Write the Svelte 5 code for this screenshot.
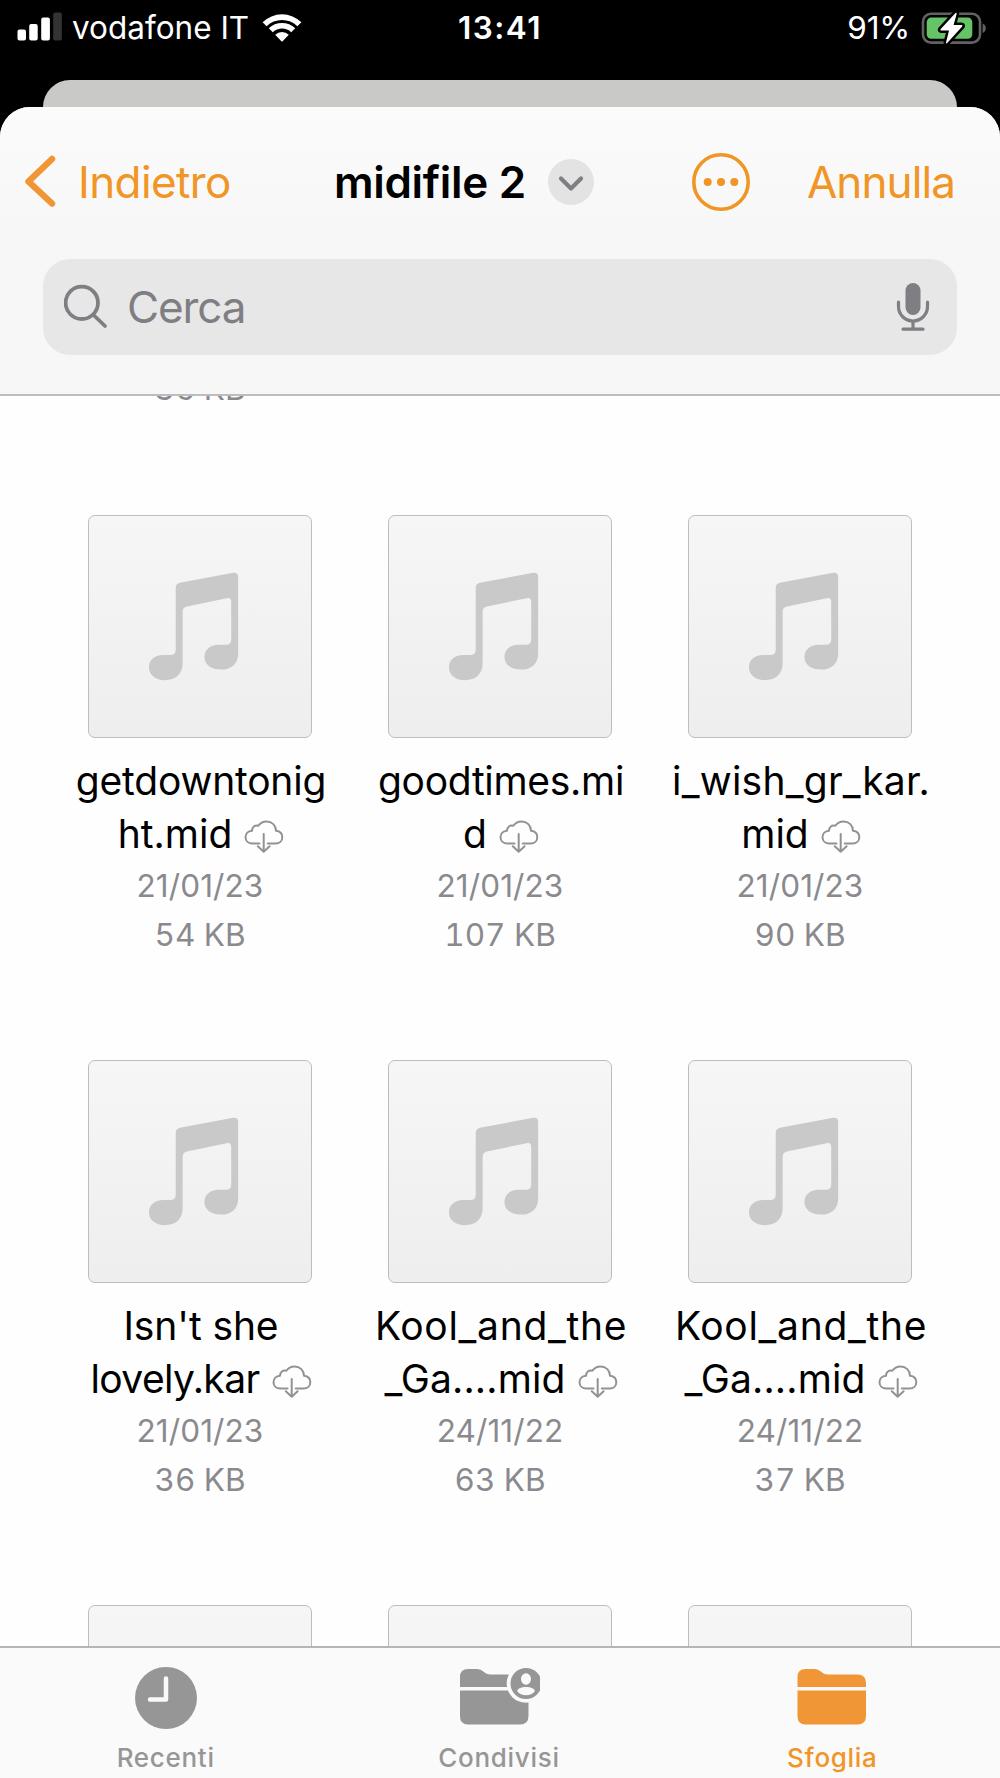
<script lang="ts">
  type FileItem = {
    lines: string[];
    tracking: number[];
    date: string;
    size: string;
  };

  const previousSizes = ['36 KB', '', ''];

  const rows: FileItem[][] = [
    [
      { lines: ['getdowntonig', 'ht.mid'], tracking: [-0.2, 0], date: '21/01/23', size: '54 KB' },
      { lines: ['goodtimes.mi', 'd'], tracking: [-0.3, 0], date: '21/01/23', size: '107 KB' },
      { lines: ['i_wish_gr_kar.', 'mid'], tracking: [0.25, 0], date: '21/01/23', size: '90 KB' }
    ],
    [
      { lines: ["Isn't she", 'lovely.kar'], tracking: [-0.1, -0.6], date: '21/01/23', size: '36 KB' },
      { lines: ['Kool_and_the', '_Ga....mid'], tracking: [0.7, 0.15], date: '24/11/22', size: '63 KB' },
      { lines: ['Kool_and_the', '_Ga....mid'], tracking: [0.7, 0.15], date: '24/11/22', size: '37 KB' }
    ]
  ];
</script>

{#snippet thumb()}
  <svg class="thumb" viewBox="0 0 223 223">
    <g transform="scale(.3333) translate(-86 -46)">
      <path d="M347 264Q347 251 360 248L521 218Q536 216 536 231V462C536 494 515 511 484 511C454 511 434 496 434 473C434 451 451 436 476 436H499Q515 436 515 420V306Q515 292 501 295L381 320Q368 323 368 336V492C368 525 347 543 314 543C285 543 266 527 266 504C266 482 283 467 309 467H331Q347 467 347 451Z" />
    </g>
  </svg>
{/snippet}

<div class="phone">
  <div class="status-bar">
    <div class="carrier">
      <svg class="signal" width="46" height="30" viewBox="0 0 46 30">
        <rect x="0.5" y="18.5" width="8.5" height="11" rx="2" />
        <rect x="12.2" y="13" width="8.5" height="16.5" rx="2" />
        <rect x="24.2" y="6.5" width="8.7" height="23" rx="2" />
        <rect class="off" x="36.2" y="1.5" width="8.7" height="28" rx="2" />
      </svg>
      <span class="carrier-name">vodafone IT</span>
      <svg class="wifi" width="40" height="30" viewBox="0 0 40 30">
        <path d="M0.6 9.3A27.6 27.6 0 0 1 39.4 9.3L35.4 13.2A22 22 0 0 0 4.6 13.2Z" />
        <path d="M6.8 15.3A18.8 18.8 0 0 1 33.2 15.3L29.2 19.2A13.2 13.2 0 0 0 10.8 19.2Z" />
        <path d="M13.2 21.8A9.8 9.8 0 0 1 26.8 21.8L20.6 28.2Q20 28.8 19.4 28.2Z" />
      </svg>
    </div>
    <div class="time">13:41</div>
    <div class="power">
      <span class="percent">91%</span>
      <svg width="66" height="34" viewBox="0 0 66 34">
        <rect class="shell" x="2" y="2.8" width="57" height="28.8" rx="8" />
        <path class="nub" d="M61.6 12.4Q64.8 14 64.8 17.2Q64.8 20.4 61.6 22Z" />
        <rect class="charge" x="5.7" y="6.6" width="45.6" height="21.2" rx="4.5" />
        <path class="bolt" d="M34.5 2L19.5 18.2Q18.8 19.5 20.2 19.5H28L25 31.5Q25 33 26.2 32L41.2 15.5Q42 14 40.5 14H32.6L35.7 2.8Q35.7 1 34.5 2Z" />
      </svg>
    </div>
  </div>

  <div class="sheet-behind"></div>

  <div class="sheet">
    <header>
      <div class="nav">
        <button class="back">
          <svg width="32" height="54" viewBox="0 0 32 54">
            <path d="M28 4L4.5 26.5L28 48.5" />
          </svg>
          <span>Indietro</span>
        </button>
        <div class="title">
          <h1>midifile 2</h1>
          <svg width="46" height="46" viewBox="0 0 46 46">
            <circle cx="23" cy="23" r="23" />
            <path d="M13 19.5L23 29.5L33 19.5" />
          </svg>
        </div>
        <svg class="more" width="58" height="58" viewBox="0 0 58 58">
          <circle class="ring" cx="29" cy="29" r="27.2" />
          <circle cx="15.7" cy="29" r="4" />
          <circle cx="29" cy="29" r="4" />
          <circle cx="42.3" cy="29" r="4" />
        </svg>
        <button class="cancel">Annulla</button>
      </div>

      <div class="search">
        <svg width="44" height="46" viewBox="0 0 44 46">
          <circle cx="17.8" cy="18.8" r="16.2" />
          <path d="M29.5 31L41 42" />
        </svg>
        <span class="placeholder">Cerca</span>
        <svg class="mic" width="34" height="50" viewBox="0 0 34 50">
          <rect x="9.5" y="1" width="15" height="32" rx="7.5" />
          <path d="M2.5 20V24.5A14.5 14.5 0 0 0 31.5 24.5V20M17 39V47M7 47.2H27" />
        </svg>
      </div>
    </header>

    <main>
      <div class="row previous">
        {#each previousSizes as size}
          <div class="size">{size}</div>
        {/each}
      </div>

      {#each rows as row}
        <div class="row">
          {#each row as file}
            <div class="file">
              {@render thumb()}
              <div class="name" style="letter-spacing: {file.tracking[0]}px">{file.lines[0]}</div>
              <div class="name" style="letter-spacing: {file.tracking[1]}px">
                <span>{file.lines[1]}</span>
                <svg class="cloud" width="40" height="34" viewBox="0 0 40 34">
                  <path d="M15.5 23.5H8.5C4.5 23.5 1.5 21 1.5 17.3C1.5 13.6 4.2 11 8 10.7C8 7 11 4.8 14.3 5.8C16.2 3 19 1.5 22.5 1.5C28 1.5 32 5.5 32 10.8C35.8 11.2 38.3 13.8 38.3 17.3C38.3 21 35.5 23.5 31.5 23.5H23.8" />
                  <path d="M19.7 14V31.5M13.8 26.3L19.7 31.8L25.6 26.3" />
                </svg>
              </div>
              <div class="date">{file.date}</div>
              <div class="size">{file.size}</div>
            </div>
          {/each}
        </div>
      {/each}

      <div class="row">
        {#each previousSizes as _}
          <div class="file">{@render thumb()}</div>
        {/each}
      </div>
    </main>
  </div>

  <nav class="tabs">
    <div class="tab">
      <svg width="80" height="64" viewBox="0 0 80 64">
        <circle cx="39" cy="32" r="31" />
        <path class="hands" d="M39 12.5V33.5H23" />
      </svg>
      <span>Recenti</span>
    </div>
    <div class="tab">
      <svg width="80" height="64" viewBox="0 0 80 64">
        <path d="M0 21V11Q0 3 8 3H17Q21 3 24 6L26 7.5Q28 8.5 31 8.5H60Q68.5 8.5 68.5 17V21Z" />
        <path d="M0 24.5H68.5V50Q68.5 58.5 60 58.5H8Q0 58.5 0 50Z" />
        <circle class="gap" cx="66" cy="17.5" r="19.3" />
        <circle cx="66" cy="17.5" r="15.5" />
        <ellipse class="gap" cx="66" cy="13" rx="5" ry="5.8" />
        <path class="gap" d="M57 25C58.5 19.5 73.5 19.5 75 25Q71.5 29.3 66 29.3Q60.5 29.3 57 25Z" />
      </svg>
      <span>Condivisi</span>
    </div>
    <div class="tab active">
      <svg width="80" height="64" viewBox="0 0 80 64">
        <path d="M4.5 21V11Q4.5 3 12.5 3H21.5Q25.5 3 28.5 6L30.5 7.5Q32.5 8.5 35.5 8.5H64.5Q73 8.5 73 17V21Z" />
        <path d="M4.5 24.5H73V50Q73 58.5 64.5 58.5H12.5Q4.5 58.5 4.5 50Z" />
      </svg>
      <span>Sfoglia</span>
    </div>
  </nav>
</div>

<style>
  :global(body) {
    background: #000;
  }

  .phone {
    display: flex;
    flex-direction: column;
    width: 1000px;
    height: 1778px;
    overflow: hidden;
    background: #000;
    color: #000;
    font-family: Inter, "Liberation Sans", sans-serif;
    white-space: nowrap;
  }

  svg {
    display: block;
    flex: none;
  }

  button {
    display: flex;
    align-items: center;
    padding: 0;
    border: none;
    background: none;
    color: #f09526;
    font: inherit;
  }

  .status-bar {
    display: grid;
    grid-template-columns: 1fr auto 1fr;
    align-items: center;
    height: 55px;
    padding: 0 13px 0 17px;
    margin-bottom: 25px;
    box-sizing: border-box;
    color: #fff;
    font-size: 31.5px;
  }

  .carrier,
  .power {
    display: flex;
    align-items: center;
  }

  .signal {
    margin-bottom: 3px;
  }

  .signal,
  .wifi {
    fill: #fff;
  }

  .signal .off {
    fill: #333;
  }

  .carrier-name {
    margin-left: 9px;
  }

  .wifi {
    margin-left: 13px;
  }

  .time {
    margin-right: 4px;
    font-weight: 600;
    letter-spacing: 1.5px;
  }

  .power {
    justify-content: flex-end;
    gap: 11px;
  }

  .percent {
    letter-spacing: -0.2px;
  }

  .shell {
    fill: none;
    stroke: #626262;
    stroke-width: 2.6;
  }

  .nub {
    fill: #626262;
  }

  .charge {
    fill: #65c466;
  }

  .bolt {
    fill: #fff;
    stroke: #000;
    stroke-width: 5;
    paint-order: stroke;
  }

  .sheet-behind {
    flex: none;
    height: 27px;
    margin: 0 43px;
    border-radius: 27px 27px 0 0;
    background: #c9cac7;
  }

  .sheet {
    flex: 1;
    display: flex;
    flex-direction: column;
    min-height: 0;
    overflow: hidden;
    border-radius: 30px 30px 0 0;
    background: #fefefe;
  }

  header {
    flex: none;
    height: 289px;
    padding: 37px 43px 0;
    box-sizing: border-box;
    border-bottom: 2px solid #bdbdbd;
    background: linear-gradient(#fbfbfb, #f7f7f7 45%);
  }

  .nav {
    display: flex;
    align-items: center;
    height: 76px;
    margin: 0 2px 39px -19px;
    font-size: 44px;
  }

  .back {
    gap: 22px;
    letter-spacing: -0.6px;
  }

  .back path {
    fill: none;
    stroke: #f09637;
    stroke-width: 6.5;
    stroke-linecap: round;
    stroke-linejoin: round;
  }

  .title {
    display: flex;
    align-items: center;
    gap: 22px;
    margin-left: 103px;
  }

  h1 {
    margin: 0;
    font-size: 44px;
    font-weight: 600;
    letter-spacing: -0.3px;
  }

  .title circle {
    fill: #e3e3e4;
  }

  .title path {
    fill: none;
    stroke: #7f7f83;
    stroke-width: 4.2;
    stroke-linecap: round;
    stroke-linejoin: round;
  }

  .more {
    margin-left: 98px;
    fill: #f09526;
  }

  .more .ring {
    fill: none;
    stroke: #f09526;
    stroke-width: 3.6;
  }

  .cancel {
    margin-left: auto;
    letter-spacing: -0.9px;
  }

  .search {
    display: flex;
    align-items: center;
    height: 96px;
    padding: 0 27px 0 21px;
    box-sizing: border-box;
    border-radius: 27px;
    background: #e7e7e8;
    color: #7f7f83;
    font-size: 44px;
  }

  .search svg {
    stroke: #7f7f83;
    stroke-width: 3.8;
    stroke-linecap: round;
    fill: none;
  }

  .placeholder {
    margin-left: 19px;
    letter-spacing: -1.1px;
  }

  .search .mic {
    margin-left: auto;
    stroke-width: 3.2;
  }

  .mic rect {
    fill: #7f7f83;
    stroke: none;
  }

  main {
    flex: 1;
    min-height: 0;
    padding: 0 50px;
    overflow: hidden;
  }

  .row {
    display: grid;
    grid-template-columns: repeat(3, 300px);
    height: 545px;
    text-align: center;
  }

  .previous {
    height: 119px;
    margin-top: -32px;
    margin-bottom: 32px;
  }

  .file {
    display: flex;
    flex-direction: column;
    align-items: center;
  }

  .thumb {
    width: 222px;
    height: 221px;
    margin-bottom: 16px;
    border: 1px solid #bdbdbd;
    border-radius: 7px;
    background: linear-gradient(#f6f6f6, #eee);
    fill: #c9c9c9;
  }

  .name {
    display: flex;
    align-items: center;
    justify-content: center;
    gap: 12px;
    height: 53px;
    padding-left: 2px;
    font-size: 39px;
  }

  .cloud {
    margin-top: 7px;
    fill: none;
    stroke: #929295;
    stroke-width: 2;
    stroke-linecap: round;
    stroke-linejoin: round;
  }

  .date,
  .size {
    height: 49px;
    color: #8a8a8e;
    font-size: 31.5px;
    line-height: 49px;
  }

  .date {
    margin-top: 1px;
    letter-spacing: 0.1px;
  }

  .size {
    font-variant-numeric: tabular-nums;
  }

  .tabs {
    flex: none;
    display: grid;
    grid-template-columns: repeat(3, 1fr);
    height: 132px;
    box-sizing: border-box;
    border-top: 2px solid #b5b5b5;
    background: #fafafa;
  }

  .tab {
    display: flex;
    flex-direction: column;
    align-items: center;
    padding-top: 18px;
    color: #969696;
    font-size: 26px;
    font-weight: 500;
    line-height: 32px;
    letter-spacing: 0.7px;
  }

  .tab svg {
    margin-bottom: 12px;
    fill: #969696;
  }

  .tab span {
    margin-right: 2px;
  }

  .tab .gap {
    fill: #fafafa;
  }

  .tab .hands {
    fill: none;
    stroke: #fafafa;
    stroke-width: 4.5;
    stroke-linecap: round;
    stroke-linejoin: round;
  }

  .tab.active {
    color: #f09526;
  }

  .tab.active svg {
    fill: #f09637;
  }
</style>
